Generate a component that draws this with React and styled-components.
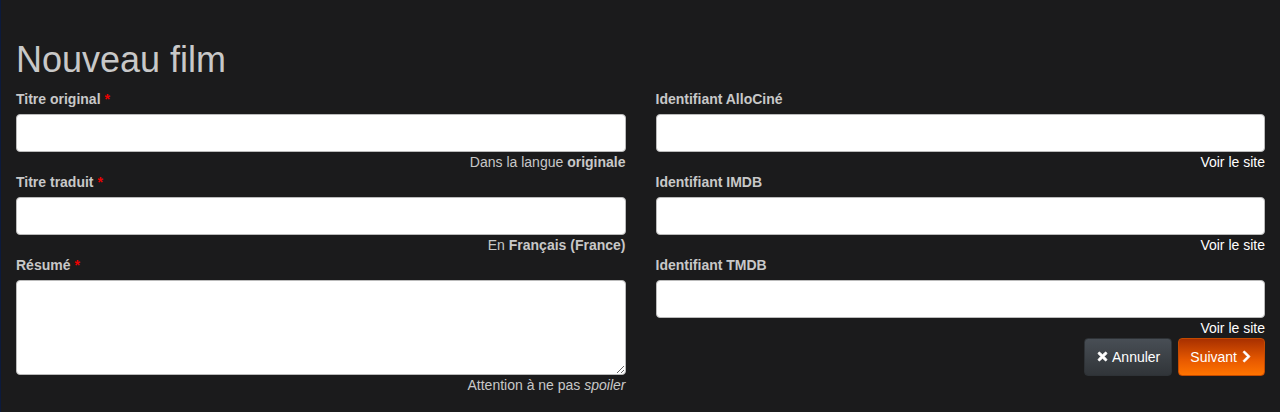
import styled, { createGlobalStyle } from "styled-components";
import { FaTimes, FaChevronRight } from "react-icons/fa";

const GlobalStyle = createGlobalStyle`
  html, body {
    margin: 0;
    background: #1b1b1c;
  }
  body {
    font-family: "Liberation Sans", Arial, Helvetica, sans-serif;
    font-size: 14px;
    line-height: 20px;
    color: #c8c8c8;
  }
  * {
    box-sizing: border-box;
  }
`;

const Page = styled.div`
  min-height: 412px;
  padding: 40px 15px 16px 15px;
  border-left: 1px solid #0c1a3c;
`;

const Title = styled.h1`
  margin: 0 0 9px;
  font-size: 36px;
  font-weight: 400;
  line-height: 1.1;
  color: #c8c8c8;
`;

const Columns = styled.div`
  display: grid;
  grid-template-columns: 1fr 1fr;
  column-gap: 30px;
`;

const Column = styled.div`
  display: flex;
  flex-direction: column;
`;

const Group = styled.div`
  display: flex;
  flex-direction: column;
`;

const Label = styled.label`
  font-weight: 700;
  margin-bottom: 5px;
  color: #c8c8c8;
`;

const Required = styled.span`
  color: #e00;
  margin-left: 4px;
`;

const Input = styled.input`
  display: block;
  width: 100%;
  height: 38px;
  padding: 8px 12px;
  font: inherit;
  color: #333;
  background: #fff;
  border: 1px solid #bbb;
  border-radius: 4px;
  outline: none;
`;

const TextArea = styled.textarea`
  display: block;
  width: 100%;
  height: 95px;
  padding: 8px 12px;
  font: inherit;
  color: #333;
  background: #fff;
  border: 1px solid #bbb;
  border-radius: 4px;
  outline: none;
  resize: vertical;
`;

const Help = styled.div`
  text-align: right;
  color: ${(p) => (p.$link ? "#fff" : "#c8c8c8")};

  b {
    font-weight: 700;
  }
`;

const Actions = styled.div`
  display: flex;
  justify-content: flex-end;
  gap: 6px;
`;

const Button = styled.button`
  display: inline-flex;
  align-items: center;
  gap: 3px;
  height: 38px;
  padding: 0 11px;
  font: inherit;
  color: #fff;
  border: 1px solid ${(p) => (p.$primary ? "#c44a00" : "#2e3236")};
  border-radius: 4px;
  background: ${(p) =>
    p.$primary
      ? "linear-gradient(#a83000, #e85a00 60%, #ff7400)"
      : "linear-gradient(#484e55, #3a3f44 60%, #313539)"};
  cursor: pointer;

  svg {
    font-size: 13px;
    stroke: #fff;
    stroke-width: 30px;
  }
`;

export default function App() {
  return (
    <Page>
      <GlobalStyle />
      <Title>Nouveau film</Title>
      <Columns>
        <Column>
          <Group>
            <Label>
              Titre original<Required>*</Required>
            </Label>
            <Input type="text" />
            <Help>
              Dans la langue <b>originale</b>
            </Help>
          </Group>
          <Group>
            <Label>
              Titre traduit<Required>*</Required>
            </Label>
            <Input type="text" />
            <Help>
              En <b>Français (France)</b>
            </Help>
          </Group>
          <Group>
            <Label>
              Résumé<Required>*</Required>
            </Label>
            <TextArea />
            <Help>
              Attention à ne pas <i>spoiler</i>
            </Help>
          </Group>
        </Column>
        <Column>
          <Group>
            <Label>Identifiant AlloCiné</Label>
            <Input type="text" />
            <Help $link>Voir le site</Help>
          </Group>
          <Group>
            <Label>Identifiant IMDB</Label>
            <Input type="text" />
            <Help $link>Voir le site</Help>
          </Group>
          <Group>
            <Label>Identifiant TMDB</Label>
            <Input type="text" />
            <Help $link>Voir le site</Help>
          </Group>
          <Actions>
            <Button type="button">
              <FaTimes /> Annuler
            </Button>
            <Button type="button" $primary>
              Suivant <FaChevronRight />
            </Button>
          </Actions>
        </Column>
      </Columns>
    </Page>
  );
}
